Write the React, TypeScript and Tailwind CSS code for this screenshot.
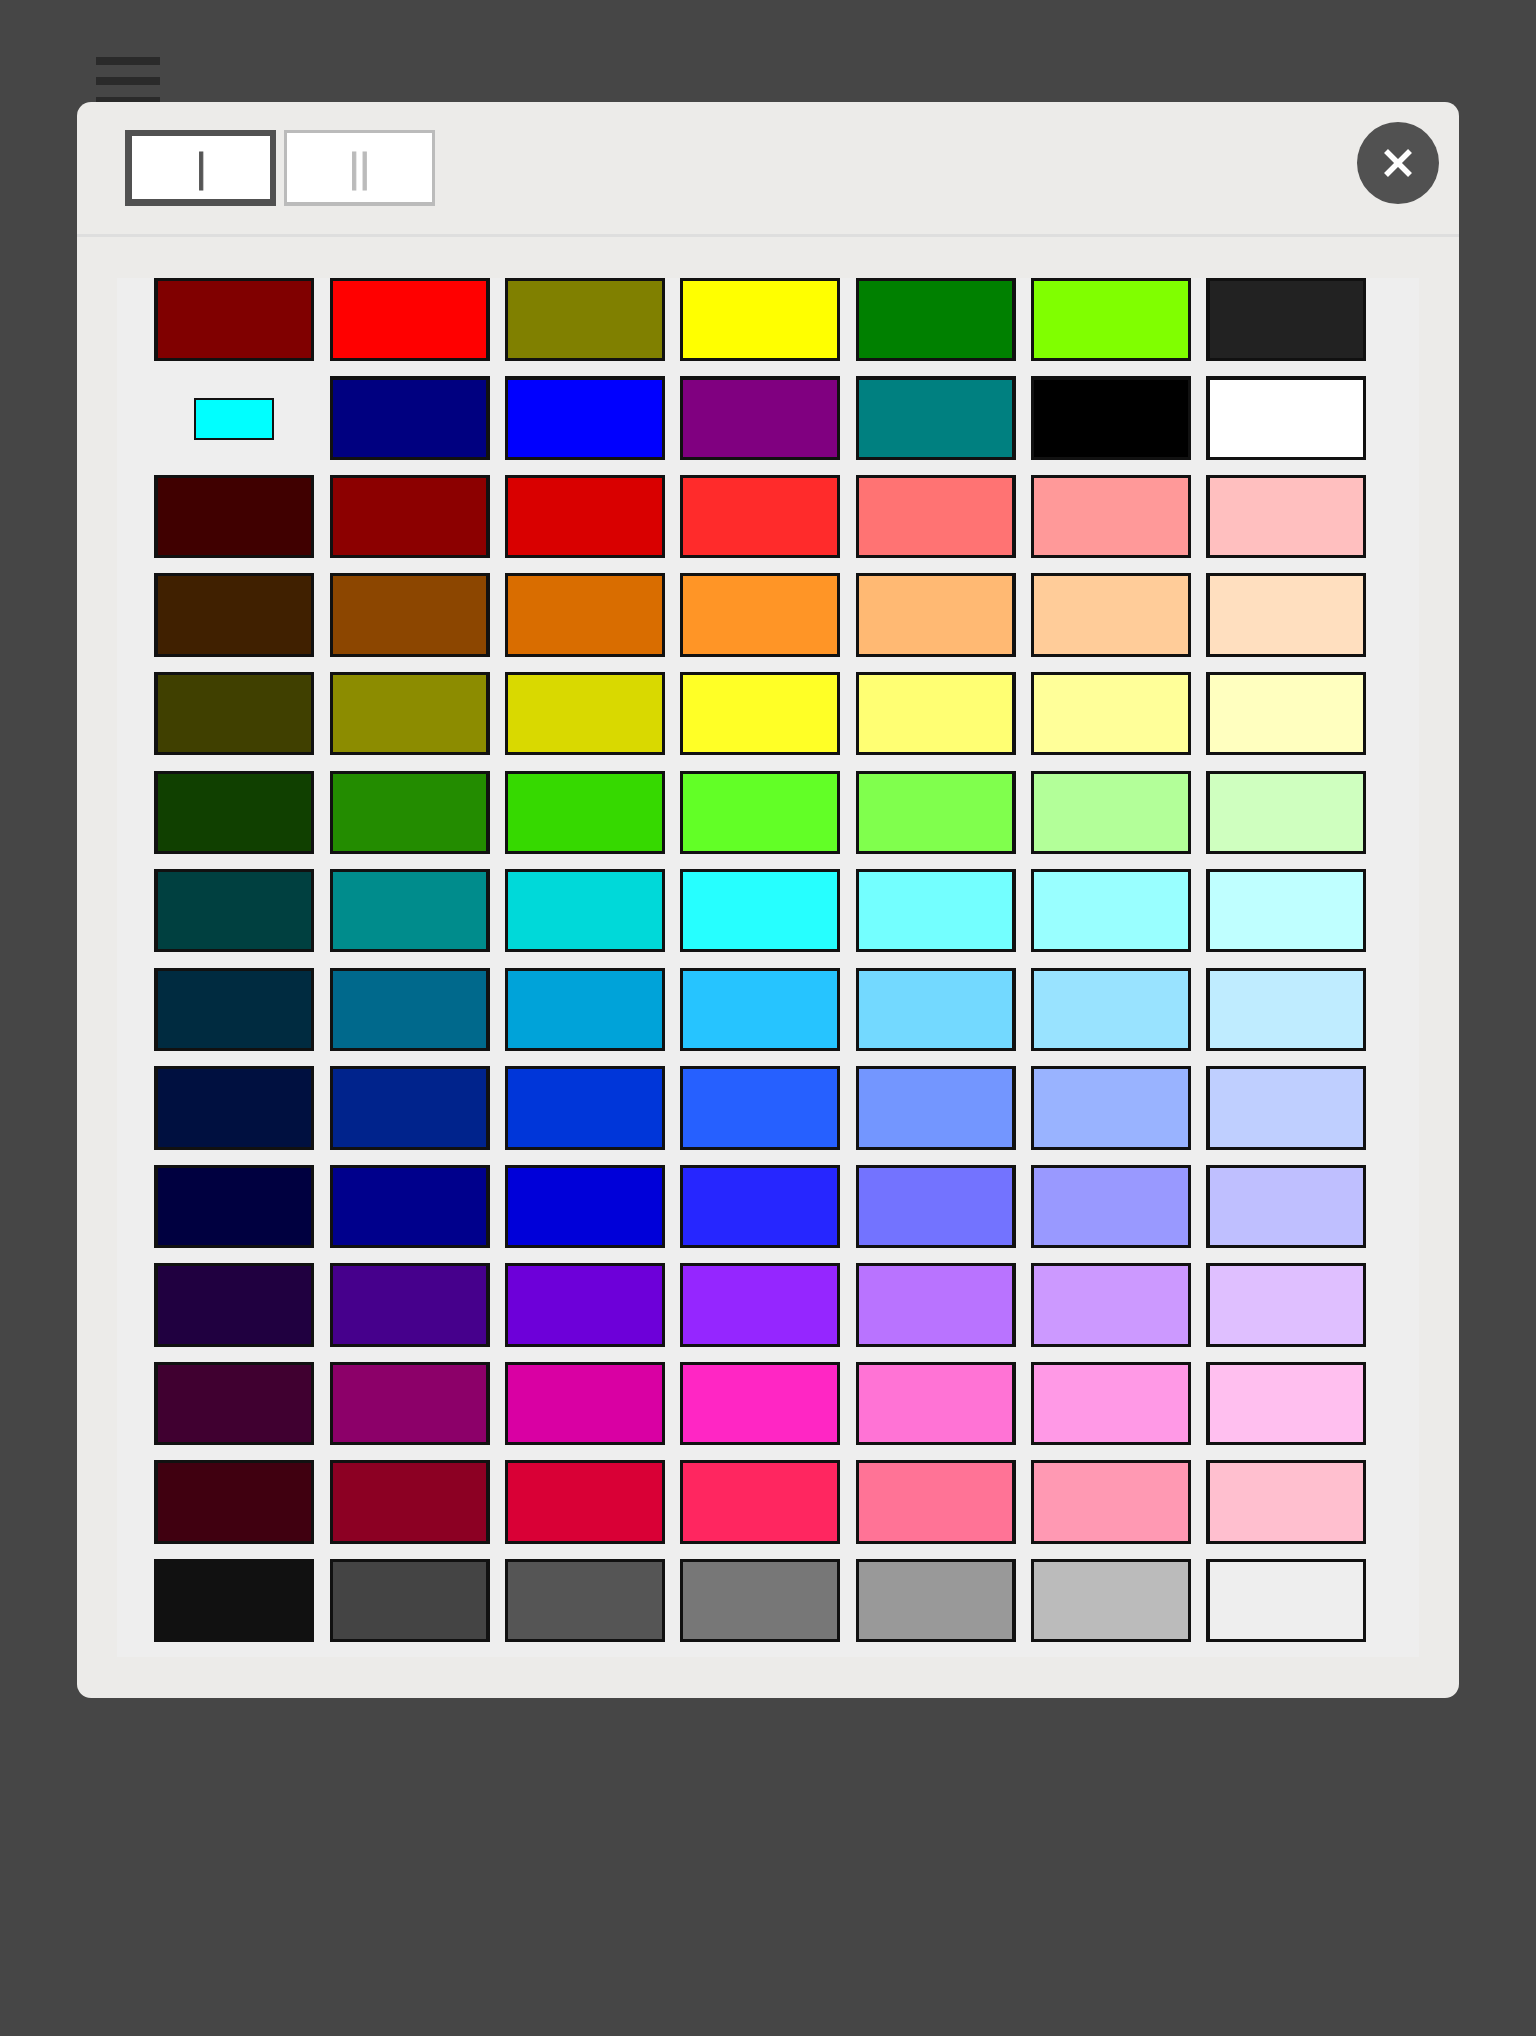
const palette = [
  ["#800000", "#ff0000", "#808000", "#ffff00", "#008000", "#80ff00", "#222222"],
  ["#00ffff", "#000080", "#0000ff", "#800080", "#008080", "#000000", "#ffffff"],
  ["#400000", "#8c0000", "#d90000", "#ff2b2b", "#ff7373", "#ff9999", "#ffbfbf"],
  ["#402000", "#8c4600", "#d96d00", "#ff9526", "#ffb973", "#ffcc99", "#ffdfbf"],
  ["#404000", "#8c8c00", "#d9d900", "#ffff26", "#ffff73", "#ffff99", "#ffffbf"],
  ["#104000", "#238c00", "#36d900", "#62ff26", "#80ff4d", "#b3ff99", "#cfffbf"],
  ["#004040", "#008c8c", "#00d9d9", "#26ffff", "#73ffff", "#99ffff", "#bfffff"],
  ["#002b40", "#00698c", "#00a3d9", "#26c4ff", "#73d9ff", "#99e3ff", "#bfecff"],
  ["#001040", "#00238c", "#0036d9", "#2660ff", "#7396ff", "#99b3ff", "#bfcfff"],
  ["#000040", "#00008c", "#0000d9", "#2626ff", "#7373ff", "#9999ff", "#bfbfff"],
  ["#200040", "#46008c", "#6d00d9", "#9526ff", "#b973ff", "#cc99ff", "#dfbfff"],
  ["#400030", "#8c0069", "#d900a3", "#ff26c4", "#ff73d5", "#ff99e6", "#ffbfef"],
  ["#400010", "#8c0023", "#d90036", "#ff2660", "#ff7396", "#ff99b3", "#ffbfcf"],
  ["#111111", "#444444", "#555555", "#777777", "#999999", "#bbbbbb", "#eeeeee"],
];

const colBorders = [
  "border-l-4 border-r-[3px]",
  "border-l-[3px] border-r-4",
  "border-l-[3px] border-r-[3px]",
  "border-l-[3px] border-r-[3px]",
  "border-l-[3px] border-r-4",
  "border-l-[3px] border-r-[3px]",
  "border-l-4 border-r-[3px]",
];

function Swatch({ color, row, col }: { color: string; row: number; col: number }) {
  // the selected colour sits smaller in its cell
  if (row === 1 && col === 0) {
    return (
      <div className="flex items-center justify-center">
        <button
          className="mt-0.5 h-[42px] w-20 border-2 border-[#111111]"
          style={{ backgroundColor: color }}
        />
      </div>
    );
  }
  const top = row === 1 ? "border-t-4" : "border-t-[3px]";
  return (
    <button
      className={`${colBorders[col]} ${top} border-b-[3px] border-[#111111]`}
      style={{ backgroundColor: color }}
    />
  );
}

export default function App() {
  return (
    <div className="relative h-[2036px] bg-[#464646] font-['Liberation_Sans',Arial,sans-serif]">
      <div className="ml-24 flex w-16 flex-col gap-3 pt-[57px]">
        <div className="h-2 bg-[#2a2a2a]"></div>
        <div className="h-2 bg-[#2a2a2a]"></div>
        <div className="h-2 bg-[#2a2a2a]"></div>
      </div>

      <div className="absolute left-[77px] top-[102px] w-[1382px] rounded-[14px] bg-[#ecebe9]">
        <div className="flex h-[135px] items-start justify-between border-b-[3px] border-[#dedede] pl-12 pr-5 pt-5">
          <div className="mt-2 flex gap-2">
            <button className="flex h-[76px] w-[151px] items-center justify-center border-b-[7px] border-l-[7px] border-r-[6px] border-t-[6px] border-[#515151] bg-white text-[40px] leading-none text-[#555555]">
              <span className="will-change-transform [-webkit-text-stroke:1px_#555555]">|</span>
            </button>
            <button className="flex h-[76px] w-[151px] items-center justify-center border-[3px] border-b-4 border-[#bbbbbb] bg-white text-[40px] leading-none text-[#bbbbbb]">
              <span className="will-change-transform [-webkit-text-stroke:1px_#bbbbbb]">||</span>
            </button>
          </div>
          <button className="flex h-[82px] w-[82px] items-center justify-center rounded-full bg-[#515151]">
            <svg width="28" height="28" viewBox="0 0 28 28" stroke="white" strokeWidth="5.5">
              <line x1="2" y1="2" x2="26" y2="26" />
              <line x1="26" y1="2" x2="2" y2="26" />
            </svg>
          </button>
        </div>

        <div className="px-10 pb-[40.7px] pt-[40.8px]">
          <div className="grid auto-rows-[83.4px] grid-cols-[repeat(7,160px)] gap-x-[15.34px] gap-y-[15.16px] bg-[#eeeeee] pb-[15px] pl-[37.2px]">
            {palette.map((shades, row) =>
              shades.map((color, col) => (
                <Swatch key={`${row}-${col}`} color={color} row={row} col={col} />
              )),
            )}
          </div>
        </div>
      </div>
    </div>
  );
}
